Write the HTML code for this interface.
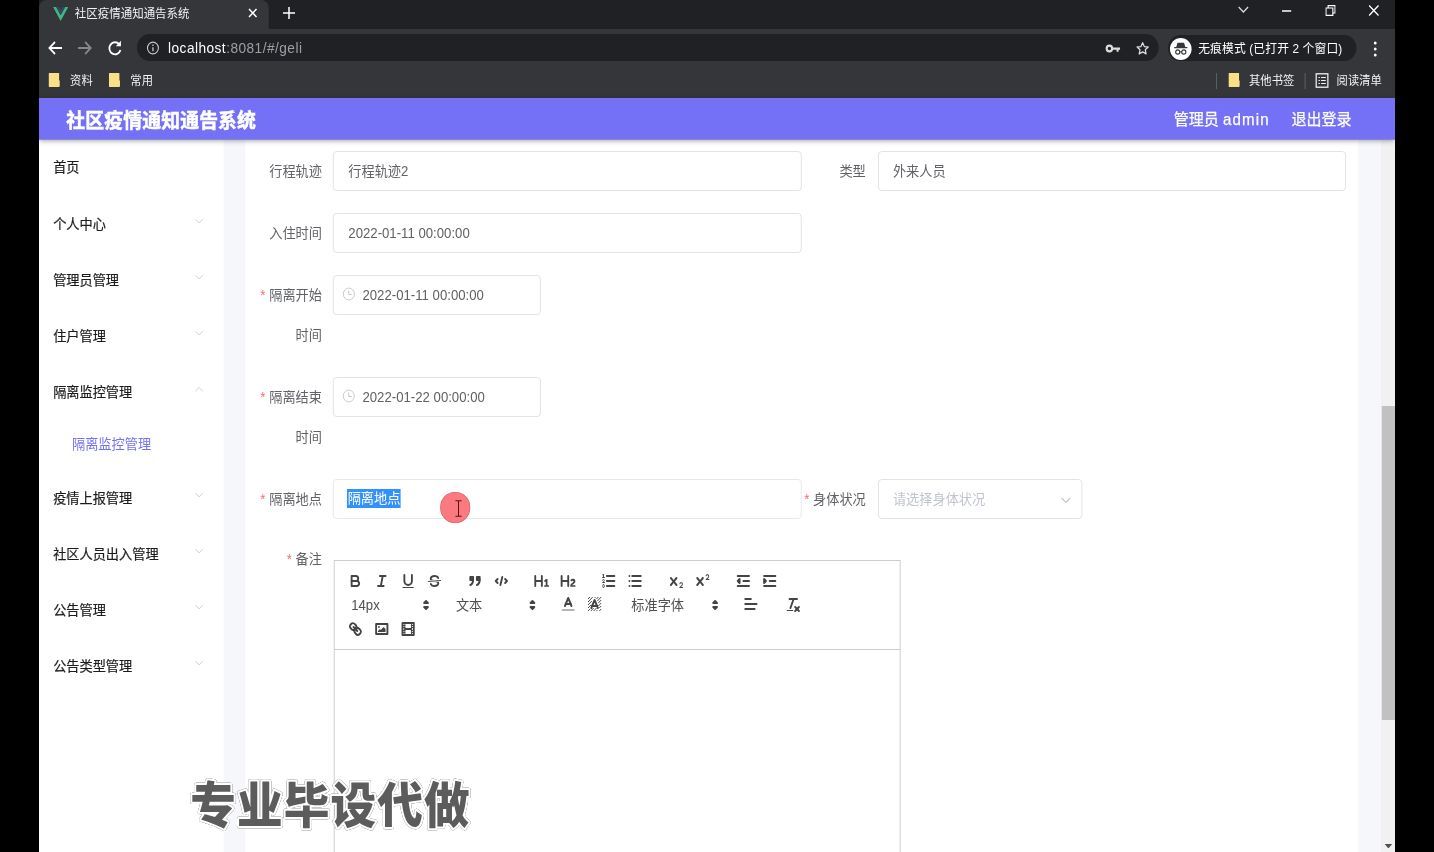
<!DOCTYPE html>
<html lang="zh-CN">
<head>
<meta charset="utf-8">
<title>社区疫情通知通告系统</title>
<style>
*{box-sizing:border-box;margin:0;padding:0}
html,body{width:1434px;height:852px;overflow:hidden;background:#000}
body{position:relative;font-family:"Liberation Sans","Noto Sans CJK SC",sans-serif;color:#606266}
.abs{position:absolute}
/* the captured window is 1440px wide, squeezed horizontally to 1356px */
#win{position:absolute;left:39px;top:0;width:1440px;height:852px;overflow:hidden;background:#f6f7fa;transform-origin:0 0;transform:scaleX(0.94167)}
/* ---------- browser chrome ---------- */
#tabstrip{position:absolute;left:0;top:0;width:1440px;height:29px;background:#202124}
#tab{position:absolute;left:0;top:0;width:244px;height:29px;background:#35363a;border-radius:8px 8px 0 0}
#tab .t{position:absolute;left:38px;top:0;line-height:29px;font-size:12.2px;color:#f1f3f4;white-space:nowrap}
#toolbar{position:absolute;left:0;top:29px;width:1440px;height:37px;background:#35363a}
#bm{position:absolute;left:0;top:66px;width:1440px;height:32px;background:#35363a}
#omni{position:absolute;left:104px;top:5px;width:1085px;height:27px;border-radius:13.5px;background:#202124}
#omni .u{position:absolute;left:33px;top:0;line-height:28px;font-size:14.5px;color:#9aa0a6;white-space:nowrap;letter-spacing:.5px}
#omni .u b{font-weight:normal;color:#fff}
#incog{position:absolute;left:1199px;top:6px;width:200px;height:26px;border-radius:13px;background:#202124}
#incog .t{position:absolute;left:32px;top:0;line-height:28px;font-size:12.5px;color:#fff;white-space:nowrap;letter-spacing:.15px}
.bmt{position:absolute;top:0;line-height:31px;font-size:12px;color:#f1f3f4;white-space:nowrap}
.fold{position:absolute;top:6.500px;width:12.400px;height:14.500px;background:#fbe08a;border-radius:1px;clip-path:polygon(0 0,92% 0,92% 55%,100% 55%,100% 100%,0 100%)}
/* ---------- app header ---------- */
#hdr{position:absolute;left:0;top:98px;width:1440px;height:41px;background:#7471f7;box-shadow:0 1px 0 rgba(122,118,215,.75),0 2px 5px rgba(0,0,0,.35);z-index:5}
#hdr .title{position:absolute;left:29px;top:0;line-height:47px;-webkit-text-stroke:.5px #fff;letter-spacing:.15px;font-size:20px;font-weight:bold;color:#fff;white-space:nowrap}
#hdr .r{position:absolute;top:0;line-height:44px;font-size:16px;color:#fff;-webkit-text-stroke:.25px #fff;white-space:nowrap}
/* ---------- sidebar ---------- */
#side{position:absolute;left:0;top:139px;width:196px;height:713px;background:#fff}
.mi{position:absolute;left:15px;font-size:14px;line-height:20px;color:#1c1c1c;-webkit-text-stroke:.2px #1c1c1c;white-space:nowrap}
.mi.sub{left:35px;color:#7471f7;-webkit-text-stroke:0}
.arr{position:absolute;left:165px;width:10px;height:6.400px}
/* ---------- content ---------- */
#panel{position:absolute;left:219px;top:139px;width:1182px;height:713px;background:#fff}
#sbar{position:absolute;left:1425px;top:139px;width:15px;height:713px;background:#f1f1f1}
#sbar .th{position:absolute;left:1px;top:267px;width:14px;height:314px;background:#c1c1c1}
.lbl{position:absolute;width:80px;padding-right:12px;font-size:14px;line-height:40px;color:#606266;text-align:right}
.lbl i{font-style:normal;color:#f56c6c;margin-right:4px}
.inp{position:absolute;height:40px;text-indent:.3px;border:1px solid #dfe2e8;border-radius:4px;background:#fff;font-size:14px;line-height:38px;color:#606266;padding-left:15px;white-space:nowrap}
.inp.date{padding-left:30px}
.ph{color:#c0c4cc}
.sel{background:#3390ff;color:#fff;display:inline-block;line-height:19px;height:18.500px;vertical-align:middle;margin-top:-4px;margin-left:-1px}
</style>
</head>
<body>
<div id="win">

<!-- browser chrome -->
<div id="tabstrip">
  <div id="tab">
    <svg class="abs" style="left:15px;top:7px" width="16" height="14" viewBox="0 0 16 14"><path d="M0 0h3.200L8 8.300 12.800 0H16L8 14z" fill="#41b883"/><path d="M3.200 0h3L8 3.200 9.800 0h3L8 8.300z" fill="#35495e"/></svg>
    <span class="t">社区疫情通知通告系统</span>
    <svg class="abs" style="left:222px;top:8px" width="10" height="10" viewBox="0 0 10 10"><path d="M1 1l8 8M9 1l-8 8" stroke="#fff" stroke-width="1.600" fill="none"/></svg>
  </div>
  <svg class="abs" style="left:259px;top:7px" width="13" height="12" viewBox="0 0 13 12"><path d="M6.500 0v12M0 6h13" stroke="#fff" stroke-width="1.600" fill="none"/></svg>
  <svg class="abs" style="left:1273px;top:6px" width="12" height="8" viewBox="0 0 12 8"><path d="M1 1l5 5 5-5" stroke="#ddd" stroke-width="1.300" fill="none"/></svg>
  <svg class="abs" style="left:1320px;top:9.500px" width="10" height="2" viewBox="0 0 10 2"><path d="M0 1h10" stroke="#fff" stroke-width="1.400"/></svg>
  <svg class="abs" style="left:1366px;top:5px" width="11" height="11" viewBox="0 0 11 11"><path d="M.700 3h7.300v7.300H.700z M3 3V.700h7.300V8H8" stroke="#fff" stroke-width="1.200" fill="none"/></svg>
  <svg class="abs" style="left:1412px;top:5px" width="11" height="11" viewBox="0 0 11 11"><path d="M.500.500l10 10M10.500.500l-10 10" stroke="#fff" stroke-width="1.400" fill="none"/></svg>
</div>

<div id="toolbar">
  <svg class="abs" style="left:9px;top:12px" width="16" height="14" viewBox="0 0 16 14"><path d="M8 1L2 7l6 6M2 7H15.500" stroke="#fff" stroke-width="1.800" fill="none"/></svg>
  <svg class="abs" style="left:41px;top:12px" width="16" height="14" viewBox="0 0 16 14"><path d="M8 1l6 6-6 6M14 7H.5" stroke="#85878b" stroke-width="1.800" fill="none"/></svg>
  <svg class="abs" style="left:73px;top:11px" width="15" height="16" viewBox="0 0 15 16"><path d="M12.200 4.300A6 6 0 1 0 13.500 10" stroke="#fff" stroke-width="1.900" fill="none"/><path d="M14 0.800v5.400H8.600z" fill="#fff"/></svg>
  <div id="omni">
    <svg class="abs" style="left:10px;top:7px" width="14" height="14" viewBox="0 0 14 14"><circle cx="7" cy="7" r="5.800" stroke="#c4c7c5" stroke-width="1.200" fill="none"/><path d="M7 6.200v4M7 3.600v1.400" stroke="#c4c7c5" stroke-width="1.400"/></svg>
    <span class="u"><b>localhost</b>:8081/#/geli</span>
    <svg class="abs" style="left:1028px;top:10px" width="17" height="9" viewBox="0 0 16 9"><circle cx="4.200" cy="4.500" r="2.900" stroke="#ddd" stroke-width="2.200" fill="none"/><path d="M7 3.400h8.500v2.400H14v2h-2.200v-2H7z" fill="#ddd"/></svg>
    <svg class="abs" style="left:1060px;top:6.500px" width="16" height="15" viewBox="0 0 16 16"><path d="M8 1.800l1.900 4.100 4.400.500-3.300 3 .900 4.400L8 11.600l-3.900 2.200.900-4.400-3.300-3 4.400-.500z" stroke="#ddd" stroke-width="1.400" fill="none" stroke-linejoin="round"/></svg>
  </div>
  <div id="incog">
    <div class="abs" style="left:2px;top:3px;width:23px;height:22px;border-radius:50%;background:#fff"></div>
    <svg class="abs" style="left:5px;top:7px" width="17" height="14" viewBox="0 0 16 14"><path d="M4.500 0.800h7l1.300 4.200h2.200v1.200H1V5h2.200z" fill="#35363a"/><circle cx="4.800" cy="10" r="2.200" stroke="#35363a" stroke-width="1.200" fill="none"/><circle cx="11.200" cy="10" r="2.200" stroke="#35363a" stroke-width="1.200" fill="none"/><path d="M7 9.800h2" stroke="#35363a" stroke-width="1.100"/></svg>
    <span class="t">无痕模式 (已打开 2 个窗口)</span>
  </div>
  <svg class="abs" style="left:1417px;top:12px" width="4" height="16" viewBox="0 0 4 16"><circle cx="2" cy="2" r="1.500" fill="#fff"/><circle cx="2" cy="8" r="1.500" fill="#fff"/><circle cx="2" cy="14" r="1.500" fill="#fff"/></svg>
</div>

<div id="bm">
  <div class="fold" style="left:10px"></div><span class="bmt" style="left:33px">资料</span>
  <div class="fold" style="left:74px"></div><span class="bmt" style="left:97px">常用</span>
  <div class="abs" style="left:1250px;top:7px;width:1px;height:16px;background:#5f6368"></div>
  <div class="fold" style="left:1263px"></div><span class="bmt" style="left:1285px">其他书签</span>
  <div class="abs" style="left:1344px;top:7px;width:1px;height:16px;background:#5f6368"></div>
  <svg class="abs" style="left:1355px;top:7px" width="15" height="15" viewBox="0 0 14 15"><rect x=".800" y=".800" width="12.400" height="13.400" stroke="#f1f3f4" stroke-width="1.300" fill="none"/><path d="M3.200 4.500h1.500M6 4.500h5M3.200 7.500h1.500M6 7.500h5M3.200 10.500h1.500M6 10.500h5" stroke="#f1f3f4" stroke-width="1.200"/></svg>
  <span class="bmt" style="left:1378px">阅读清单</span>
</div>

<!-- app header -->
<div id="hdr">
  <span class="title">社区疫情通知通告系统</span>
  <span class="r" style="left:1205px">管理员 <span style="letter-spacing:1.2px">admin</span></span>
  <span class="r" style="left:1330px">退出登录</span>
</div>

<!-- sidebar -->
<div id="side">
  <span class="mi" style="top:18px">首页</span>
  <span class="mi" style="top:75px">个人中心</span>
  <span class="mi" style="top:131px">管理员管理</span>
  <span class="mi" style="top:187px">住户管理</span>
  <span class="mi" style="top:243px">隔离监控管理</span>
  <span class="mi sub" style="top:295px">隔离监控管理</span>
  <span class="mi" style="top:349px">疫情上报管理</span>
  <span class="mi" style="top:405px">社区人员出入管理</span>
  <span class="mi" style="top:461px">公告管理</span>
  <span class="mi" style="top:517px">公告类型管理</span>
  <svg class="arr" style="top:79px" viewBox="0 0 11 7"><path d="M1 1l4.500 4.500L10 1" stroke="#cfd2d8" stroke-width="1.100" fill="none"/></svg>
  <svg class="arr" style="top:135px" viewBox="0 0 11 7"><path d="M1 1l4.500 4.500L10 1" stroke="#cfd2d8" stroke-width="1.100" fill="none"/></svg>
  <svg class="arr" style="top:191px" viewBox="0 0 11 7"><path d="M1 1l4.500 4.500L10 1" stroke="#cfd2d8" stroke-width="1.100" fill="none"/></svg>
  <svg class="arr" style="top:247px" viewBox="0 0 11 7"><path d="M1 6l4.500-4.500L10 6" stroke="#cfd2d8" stroke-width="1.100" fill="none"/></svg>
  <svg class="arr" style="top:353px" viewBox="0 0 11 7"><path d="M1 1l4.500 4.500L10 1" stroke="#cfd2d8" stroke-width="1.100" fill="none"/></svg>
  <svg class="arr" style="top:409px" viewBox="0 0 11 7"><path d="M1 1l4.500 4.500L10 1" stroke="#cfd2d8" stroke-width="1.100" fill="none"/></svg>
  <svg class="arr" style="top:465px" viewBox="0 0 11 7"><path d="M1 1l4.500 4.500L10 1" stroke="#cfd2d8" stroke-width="1.100" fill="none"/></svg>
  <svg class="arr" style="top:521px" viewBox="0 0 11 7"><path d="M1 1l4.500 4.500L10 1" stroke="#cfd2d8" stroke-width="1.100" fill="none"/></svg>
</div>

<!-- content panel (coordinates inside are relative to #win) -->
<div id="panel"></div>

<!-- form -->
<div class="lbl" style="left:232.500px;top:151px">行程轨迹</div>
<div class="inp" style="left:312.200px;top:151px;width:497.600px">行程轨迹2</div>
<div class="lbl" style="left:810px;top:151px">类型</div>
<div class="inp" style="left:890.500px;top:151px;width:497px">外来人员</div>

<div class="lbl" style="left:232.500px;top:213px">入住时间</div>
<div class="inp" style="left:312.200px;top:213px;width:497.600px">2022-01-11 00:00:00</div>

<div class="lbl" style="left:232.500px;top:275px"><i>*</i>隔离开始时间</div>
<div class="inp date" style="left:312.200px;top:275px;width:221px">2022-01-11 00:00:00
  <svg class="abs" style="left:9px;top:11px" width="14" height="14" viewBox="0 0 14 14"><circle cx="7" cy="7" r="5.900" stroke="#c6c9d0" stroke-width="1" fill="none"/><path d="M7 3.500V7.500H10" stroke="#c0c4cc" stroke-width="1" fill="none"/></svg>
</div>

<div class="lbl" style="left:232.500px;top:377px"><i>*</i>隔离结束时间</div>
<div class="inp date" style="left:312.200px;top:377px;width:221px">2022-01-22 00:00:00
  <svg class="abs" style="left:9px;top:11px" width="14" height="14" viewBox="0 0 14 14"><circle cx="7" cy="7" r="5.900" stroke="#c6c9d0" stroke-width="1" fill="none"/><path d="M7 3.500V7.500H10" stroke="#c0c4cc" stroke-width="1" fill="none"/></svg>
</div>

<div class="lbl" style="left:232.500px;top:479px"><i>*</i>隔离地点</div>
<div class="inp" style="left:312.200px;top:479px;width:497.600px;border-color:#e4e7ed"><span class="sel">隔离地点</span></div>
<div class="lbl" style="left:810px;top:479px"><i>*</i>身体状况</div>
<div class="inp" style="left:890.500px;top:479px;width:217px"><span class="ph">请选择身体状况</span>
  <svg class="abs" style="left:193px;top:17px" width="11" height="7" viewBox="0 0 11 7"><path d="M1 1l4.500 4.500L10 1" stroke="#c0c4cc" stroke-width="1.100" fill="none"/></svg>
</div>

<div class="lbl" style="left:232.500px;top:539px"><i>*</i>备注</div>
<!-- rich text editor -->
<style>
#ql{position:absolute;left:312.500px;top:560px;width:602px}
#qtb{border:1px solid #ccc;padding:8px;height:90px;background:#fff;font-size:0;line-height:0}
#qed{border:1px solid #ccc;border-top:0;height:300px;background:#fff}
.qf{display:inline-block;vertical-align:middle;margin-right:15.250px;height:24px}
.qf:after{content:"";display:table;clear:both}
.qb{float:left;width:28px;height:24px;padding:3px 5px;display:inline-block}
.qb svg,.qp svg{width:18px;height:18px;display:block}
.qs{fill:none;stroke:#444;stroke-linecap:round;stroke-linejoin:round;stroke-width:2}
.qs.thin{stroke-width:1}
.qfl{fill:#444}
.qfl.qs{fill:#444}
.qp{float:left;position:relative;height:24px;font-size:14px;line-height:24px;color:#505050;font-weight:400;padding-left:8px;white-space:nowrap}
.qp svg{position:absolute;right:0;top:3px}
.qp.c{width:28px;padding:2px 4px}
.qp.c svg{position:static}
</style>
<div id="ql">
<div id="qtb">
  <span class="qf">
    <span class="qb"><svg viewBox="0 0 18 18"><path class="qs" d="M5,4H9.500A2.500,2.500,0,0,1,12,6.500v0A2.500,2.500,0,0,1,9.500,9H5V4Z"/><path class="qs" d="M5,9h5.500A2.500,2.500,0,0,1,13,11.500v0A2.500,2.500,0,0,1,10.500,14H5V9Z"/></svg></span>
    <span class="qb"><svg viewBox="0 0 18 18"><line class="qs" x1="7" x2="13" y1="4" y2="4"/><line class="qs" x1="5" x2="11" y1="14" y2="14"/><line class="qs" x1="8" x2="10" y1="14" y2="4"/></svg></span>
    <span class="qb"><svg viewBox="0 0 18 18"><path class="qs" d="M5,3V9a4.012,4.012,0,0,0,4,4H9a4.012,4.012,0,0,0,4-4V3"/><rect class="qfl" height="1" rx="0.500" ry="0.500" width="12" x="3" y="15"/></svg></span>
    <span class="qb"><svg viewBox="0 0 18 18"><line class="qs thin" x1="15.500" x2="2.500" y1="8.500" y2="9.500"/><path class="qfl" d="M9.007,8C6.542,7.791,6,7.519,6,6.500,6,5.792,7.283,5,9,5c1.571,0,2.765.679,2.969,1.309a1,1,0,0,0,1.900-.617C13.356,4.106,11.354,3,9,3,6.200,3,4,4.538,4,6.500a3.200,3.200,0,0,0,.500,1.843Z"/><path class="qfl" d="M8.984,10C11.457,10.208,12,10.479,12,11.500c0,0.708-1.283,1.500-3,1.500-1.571,0-2.765-.679-2.969-1.309a1,1,0,1,0-1.900.617C4.644,13.894,6.646,15,9,15c2.800,0,5-1.538,5-3.500a3.200,3.200,0,0,0-.500-1.843Z"/></svg></span>
  </span>
  <span class="qf">
    <span class="qb"><svg viewBox="0 0 18 18"><rect class="qfl qs" height="3" width="3" x="4" y="5"/><rect class="qfl qs" height="3" width="3" x="11" y="5"/><path class="qfl qs" style="fill-rule:evenodd" d="M7,8c0,4.031-3,5-3,5"/><path class="qfl qs" style="fill-rule:evenodd" d="M14,8c0,4.031-3,5-3,5"/></svg></span>
    <span class="qb"><svg viewBox="0 0 18 18"><polyline class="qs" points="5 7 3 9 5 11"/><polyline class="qs" points="13 7 15 9 13 11"/><line class="qs" x1="10" x2="8" y1="5" y2="13"/></svg></span>
  </span>
  <span class="qf">
    <span class="qb"><svg viewBox="0 0 18 18"><path class="qfl" d="M10,4V14a1,1,0,0,1-2,0V10H3v4a1,1,0,0,1-2,0V4A1,1,0,0,1,3,4V8H8V4a1,1,0,0,1,2,0Zm6.068,9.209H14.990V7.599a.541.541,0,0,0-.605-.605h-.627a1.011,1.011,0,0,0-.748.297L11.645,8.566a.544.544,0,0,0-.022.858l.286.308a.539.539,0,0,0,.847.033l.099-.088a1.214,1.214,0,0,0,.242-.353h.022s-.011.309-.011.605V13.209H12.041a.541.541,0,0,0-.605.605v.439a.541.541,0,0,0,.605.605h4.027a.541.541,0,0,0,.605-.605v-.439A.541.541,0,0,0,16.068,13.209Z"/></svg></span>
    <span class="qb"><svg viewBox="0 0 18 18"><path class="qfl" d="M16.740,13.814v.439a.541.541,0,0,1-.605.605H11.855a.584.584,0,0,1-.649-.605V14.013c0-2.905,3.399-3.422,3.399-4.555a.777.777,0,0,0-.847-.781,1.177,1.177,0,0,0-.836.385c-.275.264-.561.374-.858.132l-.429-.341c-.308-.242-.385-.518-.154-.814a2.972,2.972,0,0,1,2.454-1.177,2.454,2.454,0,0,1,2.684,2.409c0,2.453-3.179,2.927-3.278,3.938h2.794A.541.541,0,0,1,16.740,13.814ZM9,3A1,1,0,0,0,8,4V8H3V4A1,1,0,0,0,1,4V14a1,1,0,0,0,2,0V10H8v4a1,1,0,0,0,2,0V4A1,1,0,0,0,9,3Z"/></svg></span>
  </span>
  <span class="qf">
    <span class="qb"><svg viewBox="0 0 18 18"><line class="qs" x1="7" x2="15" y1="4" y2="4"/><line class="qs" x1="7" x2="15" y1="9" y2="9"/><line class="qs" x1="7" x2="15" y1="14" y2="14"/><line class="qs thin" x1="2.500" x2="4.500" y1="5.500" y2="5.500"/><path class="qfl" d="M3.500,6A0.500,0.500,0,0,1,3,5.500V3.085l-0.276.138A0.500,0.500,0,0,1,2.053,3c-0.124-.247-0.023-0.324.224-0.447l1-.500A0.500,0.500,0,0,1,4,2.500v3A0.500,0.500,0,0,1,3.500,6Z"/><path class="qs thin" d="M4.500,10.500h-2c0-.234,1.850-1.076,1.850-2.234A0.959,0.959,0,0,0,2.500,8.156"/><path class="qs thin" d="M2.500,14.846a0.959,0.959,0,0,0,1.850-.109A0.700,0.700,0,0,0,3.750,14a0.688,0.688,0,0,0,.600-0.736,0.959,0.959,0,0,0-1.850-.109"/></svg></span>
    <span class="qb"><svg viewBox="0 0 18 18"><line class="qs" x1="6" x2="15" y1="4" y2="4"/><line class="qs" x1="6" x2="15" y1="9" y2="9"/><line class="qs" x1="6" x2="15" y1="14" y2="14"/><line class="qs" x1="3" x2="3" y1="4" y2="4"/><line class="qs" x1="3" x2="3" y1="9" y2="9"/><line class="qs" x1="3" x2="3" y1="14" y2="14"/></svg></span>
  </span>
  <span class="qf">
    <span class="qb"><svg viewBox="0 0 18 18"><path class="qfl" d="M15.500,15H13.861a3.858,3.858,0,0,0,1.914-2.975,1.800,1.800,0,0,0-1.600-1.751A1.921,1.921,0,0,0,12.021,11.700a0.500,0.500,0,1,0,.957.291h0a0.914,0.914,0,0,1,1.053-.725,0.810,0.810,0,0,1,.744.762c0,1.076-1.170,1.870-1.940,2.431A1.456,1.456,0,0,0,12,15.500a0.500,0.500,0,0,0,.500.500h3A0.500,0.500,0,0,0,15.500,15Z"/><path class="qfl" d="M9.650,5.241a1,1,0,0,0-1.409.108L6,7.964,3.759,5.349A1,1,0,0,0,2.192,6.592Q2.215,6.621,2.241,6.649L4.684,9.500,2.241,12.350A1,1,0,0,0,3.710,13.707q0.026-.028.049-0.057L6,11.036,8.241,13.650a1,1,0,1,0,1.567-1.243Q9.785,12.378,9.759,12.350L7.316,9.500,9.759,6.651A1,1,0,0,0,9.650,5.241Z"/></svg></span>
    <span class="qb"><svg viewBox="0 0 18 18"><path class="qfl" d="M15.500,7H13.861a4.015,4.015,0,0,0,1.914-2.975,1.800,1.800,0,0,0-1.600-1.751A1.922,1.922,0,0,0,12.021,3.700a0.500,0.500,0,1,0,.957.291,0.917,0.917,0,0,1,1.053-.725,0.810,0.810,0,0,1,.744.762c0,1.077-1.164,1.925-1.934,2.486A1.423,1.423,0,0,0,12,7.500a0.500,0.500,0,0,0,.500.500h3A0.500,0.500,0,0,0,15.500,7Z"/><path class="qfl" d="M9.651,5.241a1,1,0,0,0-1.410.108L6,7.964,3.759,5.349a1,1,0,1,0-1.519,1.300L4.683,9.500,2.241,12.350a1,1,0,1,0,1.519,1.300L6,11.036,8.242,13.650a1,1,0,0,0,1.519-1.300L7.317,9.500,9.759,6.651A1,1,0,0,0,9.651,5.241Z"/></svg></span>
  </span>
  <span class="qf">
    <span class="qb"><svg viewBox="0 0 18 18"><line class="qs" x1="3" x2="15" y1="14" y2="14"/><line class="qs" x1="3" x2="15" y1="4" y2="4"/><line class="qs" x1="9" x2="15" y1="9" y2="9"/><polyline class="qs" points="5 7 5 11 3 9 5 7"/></svg></span>
    <span class="qb"><svg viewBox="0 0 18 18"><line class="qs" x1="3" x2="15" y1="14" y2="14"/><line class="qs" x1="3" x2="15" y1="4" y2="4"/><line class="qs" x1="9" x2="15" y1="9" y2="9"/><polyline class="qfl qs" points="3 7 3 11 5 9 3 7"/></svg></span>
  </span>
  <span class="qf">
    <span class="qp" style="width:98px;padding-left:10px">14px<svg viewBox="0 0 18 18"><polygon class="qs" points="7 11 9 13 11 11 7 11"/><polygon class="qs" points="7 7 9 5 11 7 7 7"/></svg></span>
  </span>
  <span class="qf">
    <span class="qp" style="width:98px">文本<svg viewBox="0 0 18 18"><polygon class="qs" points="7 11 9 13 11 11 7 11"/><polygon class="qs" points="7 7 9 5 11 7 7 7"/></svg></span>
  </span>
  <span class="qf" style="margin-left:1px;margin-right:14px">
    <span class="qp c"><svg viewBox="0 0 18 18"><line class="qs" style="opacity:.4" x1="3" x2="15" y1="15" y2="15"/><polyline class="qs" points="5.500 11 9 3 12.500 11"/><line class="qs" x1="11.630" x2="6.380" y1="9" y2="9"/></svg></span>
    <span class="qp c"><svg viewBox="0 0 18 18"><g class="qfl"><rect x="2" y="3" width="1" height="1"/><rect x="3" y="2" width="1" height="1"/><rect x="6" y="2" width="1" height="1"/><rect x="5" y="3" width="1" height="1"/><rect x="9" y="2" width="1" height="1"/><rect x="12" y="2" width="1" height="1"/><rect x="11" y="3" width="1" height="1"/><rect x="15" y="2" width="1" height="1"/><rect x="14" y="3" width="1" height="1"/><rect x="4" y="4" width="1" height="1"/><rect x="13" y="4" width="1" height="1"/><rect x="3" y="5" width="1" height="1"/><rect x="12" y="5" width="1" height="1"/><rect x="15" y="5" width="1" height="1"/><rect x="2" y="6" width="1" height="1"/><rect x="5" y="6" width="1" height="1"/><rect x="14" y="6" width="1" height="1"/><rect x="4" y="7" width="1" height="1"/><rect x="13" y="7" width="1" height="1"/><rect x="3" y="8" width="1" height="1"/><rect x="15" y="8" width="1" height="1"/><rect x="2" y="9" width="1" height="1"/><rect x="14" y="9" width="1" height="1"/><rect x="4" y="10" width="1" height="1"/><rect x="13" y="10" width="1" height="1"/><rect x="3" y="11" width="1" height="1"/><rect x="15" y="11" width="1" height="1"/><rect x="2" y="12" width="1" height="1"/><rect x="14" y="12" width="1" height="1"/><rect x="7" y="13" width="1" height="1"/><rect x="10" y="13" width="1" height="1"/><rect x="3" y="14" width="1" height="1"/><rect x="6" y="14" width="1" height="1"/><rect x="9" y="14" width="1" height="1"/><rect x="15" y="14" width="1" height="1"/><rect x="2" y="15" width="1" height="1"/><rect x="5" y="15" width="1" height="1"/><rect x="8" y="15" width="1" height="1"/><rect x="11" y="15" width="1" height="1"/><rect x="14" y="15" width="1" height="1"/></g><polyline class="qs" points="5.500 13 9 5 12.500 13"/><line class="qs" x1="11.630" x2="6.380" y1="11" y2="11"/></svg></span>
  </span>
  <span class="qf">
    <span class="qp" style="width:108px;padding-left:10px">标准字体<svg viewBox="0 0 18 18"><polygon class="qs" points="7 11 9 13 11 11 7 11"/><polygon class="qs" points="7 7 9 5 11 7 7 7"/></svg></span>
  </span>
  <span class="qf" style="margin-left:1px">
    <span class="qp c"><svg viewBox="0 0 18 18"><line class="qs" x1="3" x2="15" y1="9" y2="9"/><line class="qs" x1="3" x2="13" y1="14" y2="14"/><line class="qs" x1="3" x2="9" y1="4" y2="4"/></svg></span>
  </span>
  <span class="qf">
    <span class="qb"><svg viewBox="0 0 18 18"><line class="qs" x1="5" x2="13" y1="3" y2="3"/><line class="qs" x1="6" x2="9.350" y1="12" y2="3"/><line class="qs" x1="11" x2="15" y1="11" y2="15"/><line class="qs" x1="15" x2="11" y1="11" y2="15"/><rect class="qfl" height="1" rx="0.500" ry="0.500" width="7" x="2" y="14"/></svg></span>
  </span>
  <span class="qf">
    <span class="qb"><svg viewBox="0 0 18 18"><line class="qs" x1="7" x2="11" y1="7" y2="11"/><path class="qs" d="M8.900,4.577a3.476,3.476,0,0,1,.360,4.679A3.476,3.476,0,0,1,4.577,8.900C3.185,7.500,2.035,6.400,4.217,4.217S7.500,3.185,8.900,4.577Z"/><path class="qs" d="M13.423,9.100a3.476,3.476,0,0,0-4.679-.360,3.476,3.476,0,0,0,.360,4.679c1.392,1.392,2.500,2.542,4.679.360S14.815,10.500,13.423,9.100Z"/></svg></span>
    <span class="qb"><svg viewBox="0 0 18 18"><rect class="qs" height="10" width="12" x="3" y="4"/><circle class="qfl" cx="6" cy="7" r="1"/><polyline class="qfl" points="5 12 5 11 7 9 8 10 11 7 13 9 13 12 5 12"/></svg></span>
    <span class="qb"><svg viewBox="0 0 18 18"><rect class="qs" height="12" width="12" x="3" y="3"/><rect class="qfl" height="12" width="1" x="5" y="3"/><rect class="qfl" height="12" width="1" x="12" y="3"/><rect class="qfl" height="2" width="8" x="5" y="8"/><rect class="qfl" height="1" width="3" x="3" y="5"/><rect class="qfl" height="1" width="3" x="3" y="7"/><rect class="qfl" height="1" width="3" x="3" y="10"/><rect class="qfl" height="1" width="3" x="3" y="12"/><rect class="qfl" height="1" width="3" x="12" y="5"/><rect class="qfl" height="1" width="3" x="12" y="7"/><rect class="qfl" height="1" width="3" x="12" y="10"/><rect class="qfl" height="1" width="3" x="12" y="12"/></svg></span>
  </span>
</div>
<div id="qed"></div>
</div>

<!-- mouse click highlight -->
<div class="abs" style="left:426px;top:492px;width:31.600px;height:31.400px;border-radius:50%;background:#fb7a80;box-shadow:inset 0 0 0 .6px rgba(190,60,70,.55);z-index:8"></div>
<svg class="abs" style="left:441px;top:500px;z-index:9" width="9" height="17" viewBox="0 0 9 18"><path d="M1 .7h2.500q1 0 1 1v14.600q0 1-1 1H1M8 .7H5.500q-1 0-1 1M8 17.300H5.500q-1 0-1-1" stroke="#5a1012" stroke-width="1.100" fill="none"/></svg>

<!-- watermark -->
<svg class="abs" id="wm" style="left:150px;top:760px;z-index:11;filter:drop-shadow(0 0 .6px #777) drop-shadow(0 0 .4px #999)" width="340" height="92"><text x="10.500" y="62.600" font-family="'Liberation Sans','Noto Sans CJK SC',sans-serif" font-size="48.500" font-weight="900" letter-spacing="1.200" fill="#5c5c5c" stroke="#fff" stroke-width="4.400" stroke-linejoin="round" paint-order="stroke fill">专业毕设代做</text></svg>

<div id="sbar"><div class="th"></div>
  <svg class="abs" style="left:3.500px;top:704.500px" width="8" height="4.500" viewBox="0 0 9 5"><path d="M0 0h9L4.500 5z" fill="#505050"/></svg>
</div>

</div>
</body>
</html>
